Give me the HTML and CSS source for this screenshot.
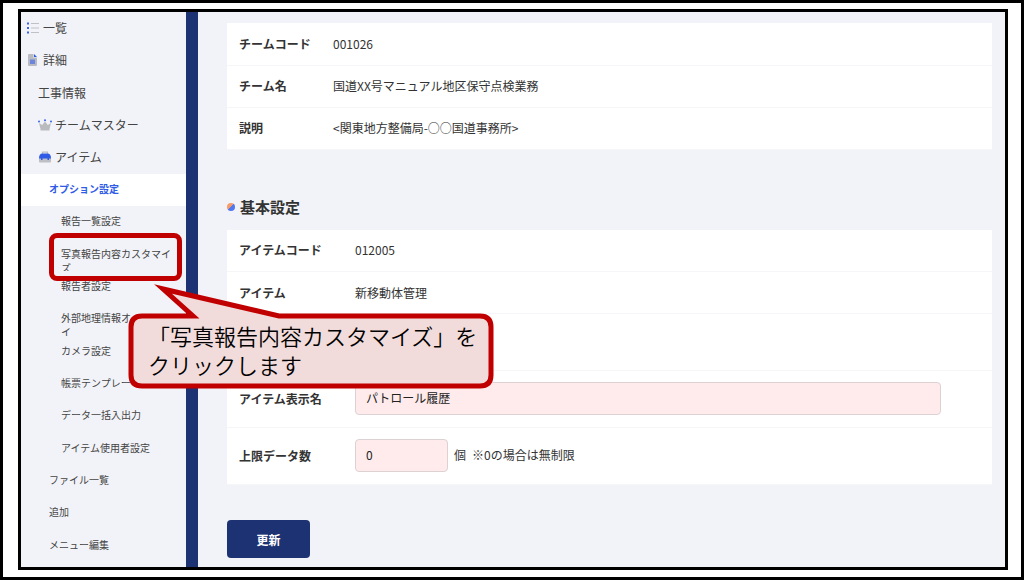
FILE: index.html
```html
<!DOCTYPE html>
<html lang="ja">

<head>
	<meta charset="utf-8" />
	<title>オプション設定</title>
	<link rel="stylesheet" href="styles.css">
</head>

<body>
	<div class="frame">
		<nav class="sidebar">
			<a href="#" class="item">
				<svg class="icon" width="12" height="12" viewBox="0 0 12 12">
					<path d="M4 1.500h8M4 6h8M4 10.500h8" stroke="#bfc1c6" stroke-width="1.200" />
					<path d="M0 .5h2v2H0zM0 5h2v2H0zM0 9.500h2v2H0z" fill="#3a63e8" />
				</svg>一覧</a>
			<a href="#" class="item">
				<svg class="icon" width="12" height="12" viewBox="0 0 12 12">
					<path d="M2 0h4.500v3.500H10V11q0 1-1 1H2q-1 0-1-1V1q0-1 1-1z" fill="#b9bbc2" />
					<path d="M7 0l3 3H7z" fill="#2f5be6" />
					<path d="M3 5.500h5V10H3z" fill="#6d86dc" />
				</svg>詳細</a>
			<a href="#" class="item level2">工事情報</a>
			<a href="#" class="item level2">
				<svg class="icon wide" width="14" height="12" viewBox="0 0 14 12">
					<path d="M1 4l3.200 2L7 2.500 9.800 6 13 4l-1.500 6v1.500h-9V10z" fill="#b9bbbf" />
					<circle cx="1" cy="2.500" r="1" fill="#3a63e8" />
					<circle cx="7" cy="1.200" r="1" fill="#3a63e8" />
					<circle cx="13" cy="2.500" r="1" fill="#3a63e8" />
				</svg>チームマスター</a>
			<a href="#" class="item level2">
				<svg class="icon wide" width="14" height="12" viewBox="0 0 14 12">
					<path d="M4.500 3V1.200h5V3" fill="none" stroke="#b9bbc2" stroke-width="1.200" />
					<path d="M1 7h12v3.500q0 1-1 1H2q-1 0-1-1z" fill="#bdbfc3" />
					<path d="M1 7.500q0-5 3.500-5h5q3.500 0 3.500 5h-2V9H9.500V7.500h-5V9H3V7.500z" fill="#2f5be6" />
				</svg>アイテム</a>
			<a href="#" class="item level3 current">オプション設定</a>
			<a href="#" class="item level4">報告一覧設定</a>
			<a href="#" class="item level4">写真報告内容カスタマイズ</a>
			<a href="#" class="item level4">報告者設定</a>
			<a href="#" class="item level4">外部地理情報オーバーレイ</a>
			<a href="#" class="item level4">カメラ設定</a>
			<a href="#" class="item level4">帳票テンプレート</a>
			<a href="#" class="item level4">データ一括入出力</a>
			<a href="#" class="item level4">アイテム使用者設定</a>
			<a href="#" class="item level3">ファイル一覧</a>
			<a href="#" class="item level3">追加</a>
			<a href="#" class="item level3">メニュー編集</a>
		</nav>

		<main class="content">
			<table class="info">
				<tr>
					<th scope="row">チームコード</th>
					<td>001026</td>
				</tr>
				<tr>
					<th scope="row">チーム名</th>
					<td>国道XX号マニュアル地区保守点検業務</td>
				</tr>
				<tr>
					<th scope="row">説明</th>
					<td>&lt;関東地方整備局-○○国道事務所&gt;</td>
				</tr>
			</table>

			<h2>基本設定</h2>
			<form>
				<table class="info settings">
					<tr>
						<th scope="row">アイテムコード</th>
						<td>012005</td>
					</tr>
					<tr>
						<th scope="row">アイテム</th>
						<td>新移動体管理</td>
					</tr>
					<tr class="tall">
						<th></th>
						<td></td>
					</tr>
					<tr class="tall">
						<th scope="row"><label for="itemName">アイテム表示名</label></th>
						<td><input type="text" id="itemName" name="itemName" value="パトロール履歴" /></td>
					</tr>
					<tr class="tall">
						<th scope="row"><label for="limit">上限データ数</label></th>
						<td><input type="text" id="limit" name="limit" class="short" value="0" /><span class="note">個</span><span class="note">※0の場合は無制限</span></td>
					</tr>
				</table>
				<button type="submit">更新</button>
			</form>
		</main>

		<!-- Guide marks over the screen -->
		<div class="highlight"></div>
		<div class="callout">
			<svg class="bubble" width="370" height="108" viewBox="0 0 370 108">
				<path class="shape" d="M17 34H68L38 7L154 34H355Q366 34 366 45V93Q366 104 355 104H17Q6 104 6 93V45Q6 34 17 34z" />
			</svg>
			<p>「写真報告内容カスタマイズ」を<br>クリックします</p>
		</div>
	</div>
</body>

</html>
```
FILE: styles.css
```css
* {
	box-sizing: border-box;
}

body {
	margin: 0;
	min-height: 100vh;
	display: flex;
	padding: 6px 13px 7px 15px;
	border: 3px solid #000;
	background-color: #fff;
	color: #333;
	font-family: "Noto Sans CJK JP", sans-serif;
	font-size: 12px;
}

.frame {
	position: relative;
	flex: 1;
	display: flex;
	border: 3px solid #000;
	background-color: #f2f3f8;
}

/* Side menu */
.sidebar {
	flex: none;
	width: 177px;
	display: flex;
	flex-direction: column;
	padding-bottom: 5px;
	border-right: 12px solid #1d3272;
}

.item {
	flex: 1 0 32px;
	display: flex;
	overflow: hidden;
	padding: 8px 10px 0 6px;
	line-height: 16px;
	color: #444;
	text-decoration: none;
}

.icon {
	flex: none;
	margin: 2px 4px 0 0;
}

.wide {
	margin-right: 3px;
}

.level2 {
	padding-left: 17px;
}

.level3,
.level4 {
	padding-top: 8px;
	padding-left: 28px;
	font-size: 10px;
	line-height: 14px;
}

.level4 {
	padding-left: 40px;
}

.current {
	background-color: #fff;
	color: #2f5be6;
	font-weight: bold;
}

/* Main area */
.content {
	flex: 1;
	padding: 11px 13px 0 29px;
}

.info {
	width: 100%;
	border-collapse: collapse;
	background-color: #fff;
}

.info tr {
	height: 42px;
	border-bottom: 1px solid #f6f6f8;
}

.info th,
.info td {
	padding: 0 0 1px;
	text-align: left;
}

.info th {
	width: 106px;
	padding-left: 12px;
}

.settings th {
	width: 128px;
}

.info .tall {
	height: 57px;
}

h2 {
	display: flex;
	align-items: center;
	gap: 5px;
	margin: 46px 0 12px;
	font-size: 15px;
	line-height: 22px;
}

h2::before {
	content: "";
	width: 8px;
	height: 8px;
	border-radius: 50%;
	background: linear-gradient(135deg, #f79a68 50%, #5078f0 50%);
}

input[type="text"] {
	width: calc(100% - 51px);
	height: 33px;
	padding: 0 10px 2px;
	border: 1px solid #ddd2d3;
	border-radius: 4px;
	background-color: #ffebeb;
	color: #222;
	font: inherit;
}

input.short {
	width: 93px;
}

.note {
	margin-left: 6px;
}

button {
	display: block;
	width: 83px;
	height: 38px;
	margin-top: 35px;
	border: 0;
	border-radius: 4px;
	background-color: #1d3272;
	color: #fff;
	font: inherit;
	font-weight: bold;
	cursor: pointer;
}

/* Guide marks */
.highlight {
	position: absolute;
	left: 28px;
	top: 221px;
	width: 133px;
	height: 48px;
	border: 5px solid #c00000;
	border-radius: 8px;
}

.callout {
	position: absolute;
	left: 104px;
	top: 270px;
	width: 370px;
}

.bubble {
	display: block;
}

.shape {
	fill: #f2dcdb;
	stroke: #c00000;
	stroke-width: 5;
	stroke-miterlimit: 10;
}

.callout p {
	position: absolute;
	left: 23px;
	top: 39px;
	margin: 0;
	color: #000;
	font-size: 22px;
	font-weight: 350;
	line-height: 29px;
	white-space: nowrap;
}
```
